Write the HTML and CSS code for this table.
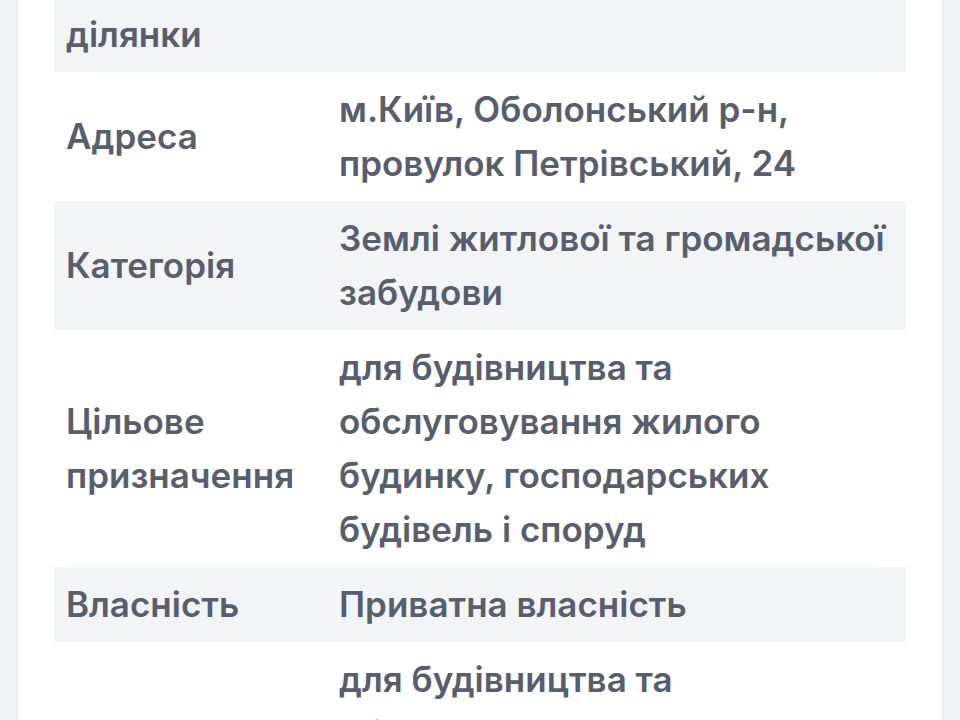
FILE: index.html
```html
<!DOCTYPE html>
<html lang="uk">
<head>
<meta charset="utf-8">
<link rel="stylesheet" href="styles.css">
</head>
<body>
<div class="card">
  <table class="info">
    <tr class="odd">
      <td class="label">Кадастровий номер ділянки</td>
      <td class="value">8000000000:78:123:0045</td>
    </tr>
    <tr>
      <td class="label">Адреса</td>
      <td class="value">м.Київ, Оболонський р-н, провулок Петрівський, 24</td>
    </tr>
    <tr class="odd">
      <td class="label">Категорія</td>
      <td class="value">Землі житлової та громадської забудови</td>
    </tr>
    <tr>
      <td class="label">Цільове призначення</td>
      <td class="value">для будівництва та обслуговування жилого будинку, господарських будівель і споруд</td>
    </tr>
    <tr class="odd">
      <td class="label">Власність</td>
      <td class="value">Приватна власність</td>
    </tr>
    <tr>
      <td class="label">Використання</td>
      <td class="value">для будівництва та обслуговування жилого будинку, господарських будівель і споруд</td>
    </tr>
  </table>
</div>
</body>
</html>
```

FILE: styles.css
```css
html, body {
  margin: 0;
  padding: 0;
}
body {
  background: #f1f2f6;
  font-family: Inter, "Noto Sans", "DejaVu Sans", sans-serif;
  overflow: hidden;
  height: 720px;
}
.card {
  background: #ffffff;
  margin: 0 18px;
  padding: 0 36px 40px;
  box-shadow: 0 0 3px rgba(0, 0, 0, 0.06);
}
.info {
  border-collapse: collapse;
  width: 100%;
  margin-top: -111px;
  table-layout: fixed;
}
.info td {
  padding: 10px 12px 11px;
  font-size: 35px;
  line-height: 54px;
  font-weight: 600;
  color: #595e6d;
  vertical-align: middle;
}
.info td.label {
  width: 249px;
}
.info tr.odd td {
  background: #f3f4f6;
}
```
